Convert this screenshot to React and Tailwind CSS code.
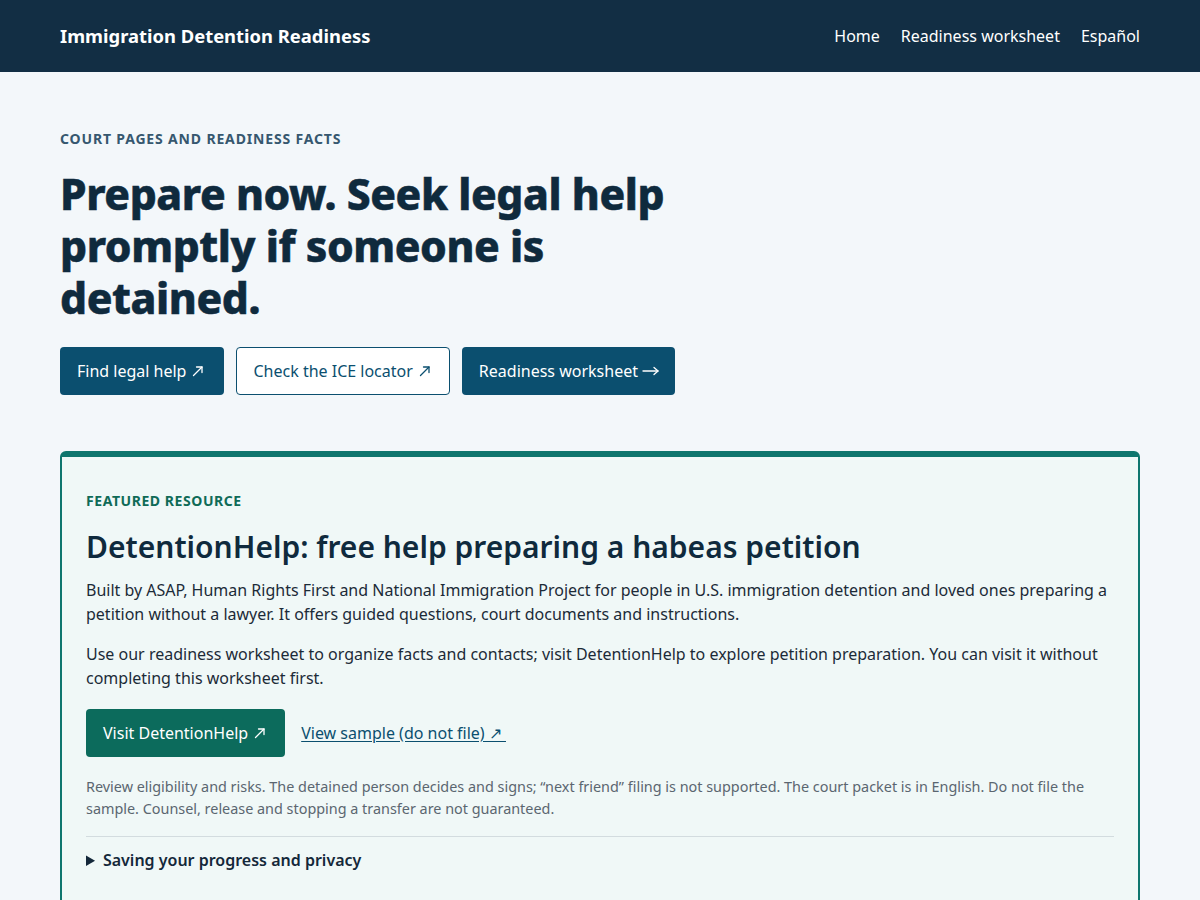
// thin outbound arrow used after external links
const ExtArrow = () => (
  <svg className="ml-[6px] inline-block align-[-1px]" width="12" height="12" viewBox="0 0 12 12" fill="none" stroke="currentColor" strokeWidth="1.3" strokeLinecap="round" strokeLinejoin="round">
    <path d="M1.5 10.5 10 2" />
    <path d="M4.5 2H10v5.5" />
  </svg>
);

const NextArrow = () => (
  <svg className="ml-[4px] inline-block" width="17" height="10" viewBox="0 0 17 10" fill="none" stroke="currentColor" strokeWidth="1.3" strokeLinecap="round" strokeLinejoin="round">
    <path d="M1 5h15" />
    <path d="M12 1.5 16 5l-4 3.5" />
  </svg>
);

export default function App() {
  return (
    <div className="min-h-screen bg-[#f3f7fa] text-[#14283a]" style={{ fontFamily: '"Noto Sans", "Open Sans", sans-serif' }}>
      <header className="bg-[#122e44] text-white">
        <div className="mx-auto flex h-[72px] max-w-[1080px] items-center justify-between">
          <span className="text-[18.4px] font-bold">Immigration Detention Readiness</span>
          <nav className="flex gap-[21px] text-[16px]">
            <a href="#">Home</a>
            <a href="#">Readiness worksheet</a>
            <a href="#">Español</a>
          </nav>
        </div>
      </header>

      <main className="mx-auto max-w-[1080px] pt-[57px]">
        <p className="text-[14px] font-bold uppercase leading-5 tracking-[0.06em] text-[#36576f]">
          Court pages and readiness facts
        </p>
        <h1 className="mt-[19px] max-w-[680px] text-[42.5px] font-extrabold leading-[52px] tracking-[-0.01em] text-[#0f2a3d] [-webkit-text-stroke:0.5px_#0f2a3d]">
          Prepare now. Seek legal help promptly if someone is detained.
        </h1>
        <div className="mt-[23px] flex gap-3 text-[16px]">
          <a href="#" className="flex h-12 items-center rounded bg-[#0b4f6f] pl-[17px] pr-[20px] text-white">
            Find legal help<ExtArrow />
          </a>
          <a href="#" className="flex h-12 items-center rounded border border-[#0b4f6f] bg-white pl-[16px] pr-[18px] text-[#0b4f6f]">
            Check the ICE locator<ExtArrow />
          </a>
          <a href="#" className="flex h-12 items-center rounded bg-[#0b4f6f] pl-[17px] pr-[16px] text-white">
            Readiness worksheet<NextArrow />
          </a>
        </div>

        {/* featured resource card */}
        <section className="mt-[56px] rounded-md border-2 border-t-[6px] border-[#0f766e] bg-[#f0f8f7] px-6 pt-[34px] pb-10">
          <p className="text-[14px] font-bold uppercase leading-5 tracking-[0.04em] text-[#0f6b57]">
            Featured resource
          </p>
          <h2 className="mt-[17px] text-[30px] font-semibold leading-[38px] text-[#0f2a3d]">
            DetentionHelp: free help preparing a habeas petition
          </h2>
          <p className="mt-[12px] text-[16px] leading-6 text-[#1c2b38]">
            Built by ASAP, Human Rights First and National Immigration Project for people in U.S. immigration detention and loved ones preparing a petition without a lawyer. It offers guided questions, court documents and instructions.
          </p>
          <p className="mt-4 text-[16px] leading-6 text-[#1c2b38]">
            Use our readiness worksheet to organize facts and contacts; visit DetentionHelp to explore petition preparation. You can visit it without completing this worksheet first.
          </p>
          <div className="mt-[19px] flex items-center gap-4 text-[16px]">
            <a href="#" className="flex h-12 items-center rounded bg-[#0c6b5c] pl-[17px] pr-[19px] text-white">
              Visit DetentionHelp<ExtArrow />
            </a>
            <a href="#" className="text-[#0b4f6f] underline underline-offset-2">
              View sample (do not file)&nbsp;↗&nbsp;
            </a>
          </div>
          <p className="mt-[19px] text-[14.4px] leading-[22px] text-[#5b6670]">
            Review eligibility and risks. The detained person decides and signs; “next friend” filing is not supported. The court packet is in English. Do not file the sample. Counsel, release and stopping a transfer are not guaranteed.
          </p>
          <details className="mt-[16px] border-t border-[#d3dcdf] pt-[11px]">
            <summary className="cursor-pointer text-[16px] font-semibold leading-6 text-[#14283a]">
              Saving your progress and privacy
            </summary>
            <p className="mt-2 text-[14px] text-[#5b6670]">
              Your answers stay in this browser unless you choose to save or print them.
            </p>
          </details>
        </section>
      </main>
    </div>
  );
}
